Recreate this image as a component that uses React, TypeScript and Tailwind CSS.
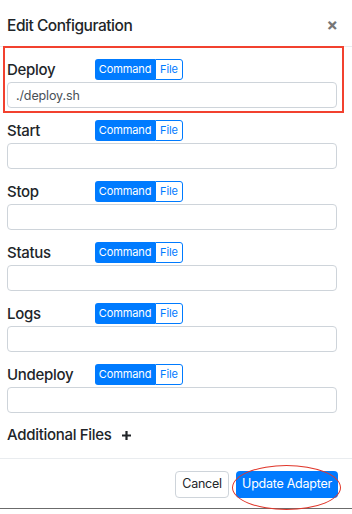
const fields = [
  { name: "Deploy", value: "./deploy.sh" },
  { name: "Start", value: "" },
  { name: "Stop", value: "" },
  { name: "Status", value: "" },
  { name: "Logs", value: "" },
  { name: "Undeploy", value: "" },
];

function ModeToggle() {
  return (
    <div className="flex h-[21px] text-[11px] leading-none tracking-[-0.01em]">
      <button className="w-[60px] rounded-l-[3px] bg-[#007bff] text-white">
        Command
      </button>
      <button className="w-[28px] rounded-r-[3px] border border-[#007bff] bg-white text-[#007bff]">
        File
      </button>
    </div>
  );
}

export default function App() {
  return (
    <div
      className="relative h-[514px] w-[352px] bg-white text-[#212529]"
      style={{ fontFamily: "Inter, 'Liberation Sans', sans-serif" }}
    >
      <div className="flex h-[509px] flex-col border-b border-[#6b6b6b]">
        {/* header */}
        <div className="flex h-[47px] items-center justify-between border-b border-[#e9ecef] pl-[7px] pr-[14px] pt-[5px]">
          <h2 className="text-[15.5px] font-medium tracking-[-0.03em]">
            Edit Configuration
          </h2>
          <span className="text-[17px] font-bold text-[#777]">×</span>
        </div>

        {/* body */}
        <div className="flex flex-col gap-[12px] pl-[7px] pr-[15px] pt-[12px]">
          {fields.map((f) => (
            <div key={f.name} className="flex flex-col gap-[2px]">
              <div className="flex h-[21px] items-center">
                <label className="w-[88px] text-[15px] font-medium leading-[21px] tracking-[-0.02em]">
                  {f.name}
                </label>
                <ModeToggle />
              </div>
              <input
                className="h-[26px] w-full rounded-[4px] border border-[#ced4da] px-[8px] text-[12.5px] tracking-[-0.01em] text-[#495057] outline-none"
                defaultValue={f.value}
              />
            </div>
          ))}
          <div className="flex h-[21px] items-center gap-[9px] text-[15px] font-medium tracking-[-0.02em]">
            Additional Files
            <svg width="11" height="11" viewBox="0 0 11 11">
              <path d="M5.5 1v9M1 5.5h9" stroke="#212529" strokeWidth="2.2" />
            </svg>
          </div>
        </div>

        {/* footer */}
        <div className="mt-auto flex h-[50px] items-center justify-end gap-[7px] border-t border-[#e9ecef] pr-[14px] pt-[1px]">
          <button className="h-[27px] w-[54px] rounded-[4px] border border-[#ced4da] bg-white text-[12.5px] tracking-[-0.02em]">
            Cancel
          </button>
          <button className="h-[27px] w-[102px] rounded-[4px] bg-[#007bff] text-[12.5px] tracking-[-0.02em] text-white">
            Update Adapter
          </button>
        </div>
      </div>

      {/* annotations */}
      <div className="pointer-events-none absolute left-[3px] top-[46px] h-[67px] w-[341px] border-2 border-[#f2412f]" />
      <div className="pointer-events-none absolute left-[232px] top-[465px] h-[45px] w-[109px] rounded-[50%] border-[1.5px] border-[#e0362a]" />
    </div>
  );
}
